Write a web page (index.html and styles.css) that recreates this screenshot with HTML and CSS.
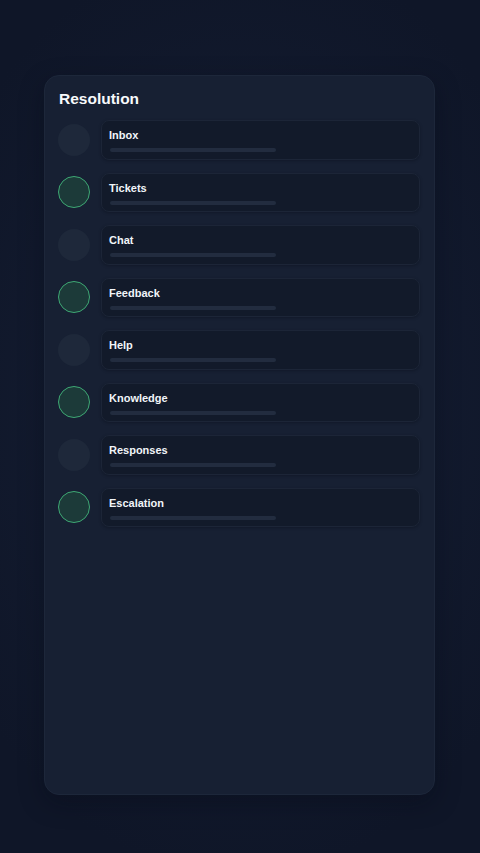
FILE: index.html
```html
<!DOCTYPE html>
<html lang="en">
<head>
<meta charset="utf-8">
<title>Resolution</title>
<link rel="stylesheet" href="styles.css">
</head>
<body>
<main class="page">
  <section class="card">
    <h1 class="title">Resolution</h1>
    <ul class="steps">
      <li class="step"><span class="dot"></span><div class="box"><span class="label">Inbox</span><span class="bar"></span></div></li>
      <li class="step"><span class="dot active"></span><div class="box"><span class="label">Tickets</span><span class="bar"></span></div></li>
      <li class="step"><span class="dot"></span><div class="box"><span class="label">Chat</span><span class="bar"></span></div></li>
      <li class="step"><span class="dot active"></span><div class="box"><span class="label">Feedback</span><span class="bar"></span></div></li>
      <li class="step"><span class="dot"></span><div class="box"><span class="label">Help</span><span class="bar"></span></div></li>
      <li class="step"><span class="dot active"></span><div class="box"><span class="label">Knowledge</span><span class="bar"></span></div></li>
      <li class="step"><span class="dot"></span><div class="box"><span class="label">Responses</span><span class="bar"></span></div></li>
      <li class="step"><span class="dot active"></span><div class="box"><span class="label">Escalation</span><span class="bar"></span></div></li>
    </ul>
  </section>
</main>
</body>
</html>
```
FILE: styles.css
```css
html, body {
  margin: 0;
  padding: 0;
  height: 100%;
}
body {
  background: radial-gradient(ellipse 70% 55% at 50% 48%, #17213a 0%, #121a2e 55%, #0f1628 100%);
  font-family: "Liberation Sans", Arial, sans-serif;
  color: #f8fafc;
}
.page {
  box-sizing: border-box;
  height: 853px;
  padding: 75px 45px 58px 44px;
  display: flex;
}
.card {
  flex: 1;
  box-sizing: border-box;
  background: #172033;
  border: 1px solid #1d273a;
  border-radius: 15px;
  padding: 13px 14px 0 13px;
  box-shadow: 0 8px 24px rgba(5, 10, 20, 0.35);
}
.title {
  margin: 0 0 11px 1px;
  font-size: 15.5px;
  line-height: 20px;
  font-weight: 700;
  color: #f8fafc;
}
.steps {
  list-style: none;
  margin: 0;
  padding: 0;
  display: flex;
  flex-direction: column;
  gap: 13px;
}
.step {
  display: flex;
  align-items: center;
  gap: 11px;
}
.dot {
  flex: none;
  width: 32px;
  height: 32px;
  box-sizing: border-box;
  border-radius: 50%;
  background: #1e283a;
}
.dot.active {
  background: #1c3a39;
  border: 1.3px solid #3ea874;
}
.box {
  flex: 1;
  height: 39.5px;
  box-sizing: border-box;
  background: #121a2a;
  border: 1px solid #1c2537;
  border-radius: 8px;
  padding: 7px 8px 0 7px;
  display: flex;
  flex-direction: column;
  box-shadow: 0 1px 3px rgba(5, 10, 20, 0.3);
}
.label {
  font-size: 11px;
  line-height: 14px;
  font-weight: 700;
  color: #f1f5f9;
}
.bar {
  margin: 6px 0 0 1px;
  width: 166px;
  height: 4px;
  border-radius: 2px;
  background: #222c3f;
}
```
